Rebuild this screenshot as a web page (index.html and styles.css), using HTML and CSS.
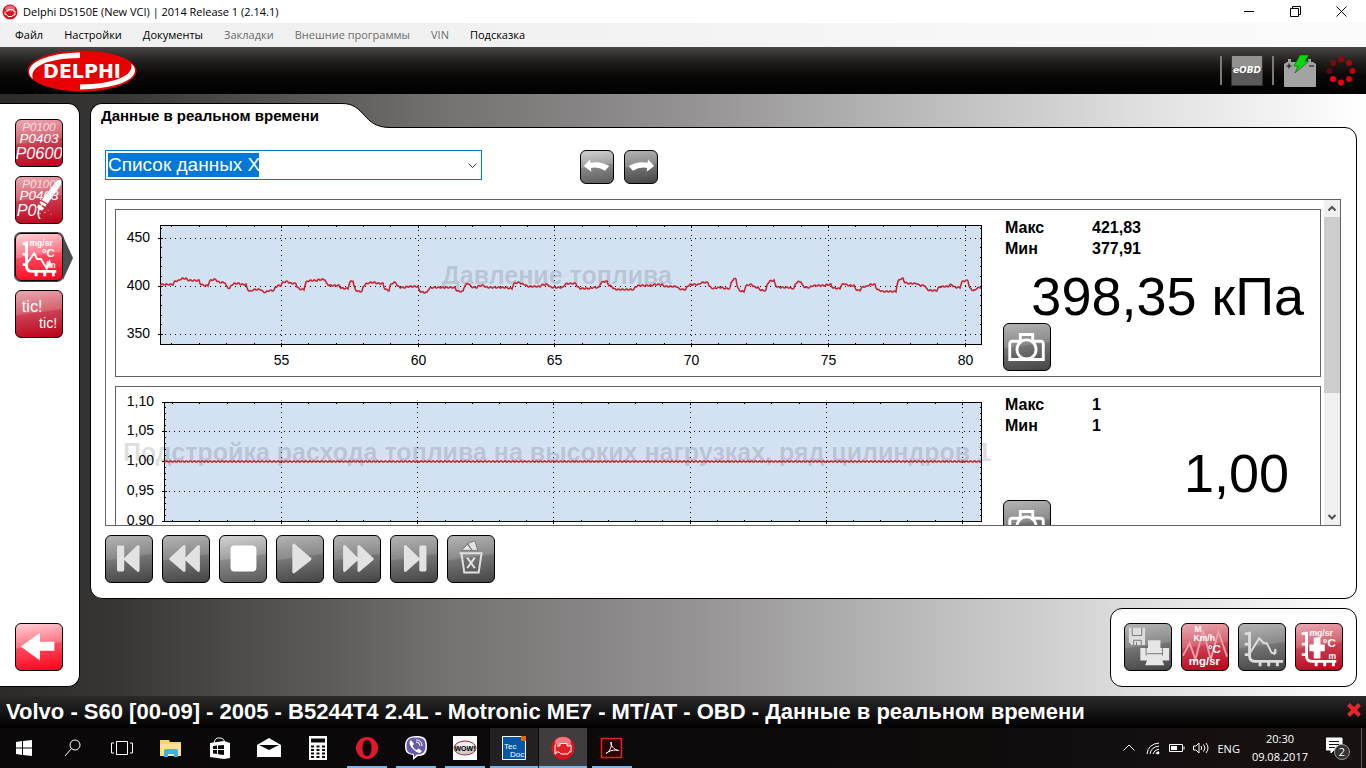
FILE: index.html
```html
<!DOCTYPE html>
<html lang="ru">
  <head>
    <meta charset="UTF-8" />
    <meta name="viewport" content="width=device-width, initial-scale=1.0" />
    <link rel="stylesheet" href="styles.css">
    <title>Delphi DS150E (New VCI)</title>
  </head>
  <body>
    <header class="titlebar">
      <svg class="app-icon" viewBox="0 0 16 16">
        <circle cx="8" cy="8" r="7.5" fill="#d8131c" />
        <ellipse cx="8" cy="4.5" rx="5" ry="3" fill="#ef6a6e" />
        <path d="M4 7h2V5.500h5V7h2v4h-2l-1 1.500H6L4.500 10.500H3V7.500" fill="none" stroke="#fff" />
      </svg>
      <span class="title">Delphi DS150E (New VCI) | 2014 Release 1 (2.14.1)</span>
      <div class="window-buttons">
        <button aria-label="Свернуть"><svg viewBox="0 0 11 11"><path d="M0 5.500h10" /></svg></button>
        <button aria-label="Свернуть в окно"><svg viewBox="0 0 11 11"><path d="M.5 2.500h8v8h-8zM2.500 2.500v-2h8v8h-2" /></svg></button>
        <button aria-label="Закрыть"><svg viewBox="0 0 11 11"><path d="M.5.500l10 10M10.500.500l-10 10" /></svg></button>
      </div>
    </header>

    <nav class="menubar">
      <button>Файл</button>
      <button>Настройки</button>
      <button>Документы</button>
      <button disabled>Закладки</button>
      <button disabled>Внешние программы</button>
      <button disabled>VIN</button>
      <button>Подсказка</button>
    </nav>

    <div class="brandbar">
      <svg class="logo" viewBox="0 0 112 42">
        <ellipse cx="56" cy="21" rx="54.500" ry="20.500" fill="#e80000" />
        <path d="M54 2.500C27 3 4 10 3 21.500c0 3 1 5 4 7.500C3 17 20 8.500 54 8z" fill="#fff" />
        <path d="M54 39.500c28-.5 54-7 55-18.500 0-3-1-5-4-7.500C109 25.500 89 34 54 34.500z" fill="#fff" />
        <text x="56" y="28" class="logo-text">DELPHI</text>
      </svg>
      <div class="indicators">
        <span class="divider"></span>
        <span class="eobd">eOBD</span>
        <span class="divider"></span>
        <svg class="battery" viewBox="0 0 34 34">
          <path d="M1 10l3-2h1V5h3v3h17V5h3v3h2l3 2v22q0 1-1 1H2q-1 0-1-1z" fill="#a3a3a3" />
          <path d="M3.500 12h5M6 9.500v5M26 12h5" stroke="#111" fill="none" />
          <path d="M17 1h9l-4 6h4L12 19l3-7h-4z" fill="#0bd80b" stroke="#0a5a0a" stroke-width=".6" />
        </svg>
        <svg class="spinner" viewBox="0 0 30 30">
          <circle cx="15" cy="3.500" r="3" fill="#8e0a0a" />
          <circle cx="23" cy="7" r="3" fill="#a30a0a" />
          <circle cx="26.500" cy="15" r="3" fill="#b80808" />
          <circle cx="23" cy="23" r="3" fill="#d40606" />
          <circle cx="15" cy="26.500" r="3" fill="#ee0202" />
          <circle cx="7" cy="23" r="3" fill="#ff0000" />
          <circle cx="3.500" cy="15" r="3" fill="#5a0c0c" />
          <circle cx="7" cy="7" r="3" fill="#780b0b" />
        </svg>
      </div>
    </div>

    <div class="workspace">
      <aside class="sidebar">
        <button class="tool red" aria-label="Коды неисправностей">
          <svg viewBox="0 0 48 48" class="codes">
            <text x="24" y="11" class="code-s">P0100</text>
            <text x="24" y="24" class="code-m">P0403</text>
            <text x="24" y="41" class="code-l">P0600</text>
          </svg>
        </button>
        <button class="tool red" aria-label="Стереть коды">
          <svg viewBox="0 0 48 48" class="codes">
            <text x="24" y="11" class="code-s">P0100</text>
            <text x="24" y="24" class="code-m">P0403</text>
            <text x="14" y="41" class="code-l">P0(</text>
            <path d="M43 3l4 0v5L33 28l-6-4z" fill="#fff" />
            <path d="M26 25l6 4-1.500 2-6-4zM23.500 28.500l6 4-2 2.500q-4 0-5.500-4z" fill="#fff" />
            <path d="M29 37h2M33 35h1M36 39h1M24 38h2" stroke="#eab" />
          </svg>
        </button>
        <button class="tool bright current" aria-label="Данные в реальном времени">
          <svg viewBox="0 0 48 48" class="graph">
            <path d="M11 8v25q0 6 6 6h25M7 10h5M7 21h5M7 32h5M21 39v5M30 39v5M39 39v5" stroke-width="3" />
            <path d="M12 30l7-10 3 6h4l6 10 3-7 2 6" stroke-width="2" />
            <text x="14" y="13" class="unit-s">mg/sr</text>
            <text x="27" y="24" class="unit-l">°C</text>
            <text x="31" y="36" class="unit-s">/m</text>
          </svg>
        </button>
        <button class="tool red" aria-label="tic tic">
          <svg viewBox="0 0 48 48">
            <text x="6" y="22" class="tic">tic!</text>
            <text x="24" y="39" class="tic tic-s">tic!</text>
          </svg>
        </button>
        <button class="tool bright back" aria-label="Назад">
          <svg viewBox="0 0 48 48"><path d="M5 23.500L25 9v9.500h15v9.500H25V38z" fill="#fff" /></svg>
        </button>
      </aside>

      <main class="content">
        <div class="tab">
          <h1>Данные в реальном времени</h1>
          <svg class="tab-end" viewBox="0 0 48 25">
            <path d="M0 .5C24 .500 20 24.500 48 24.500V25H0z" fill="#fff" />
            <path d="M0 .5C24 .500 20 24.500 48 24.500" fill="none" stroke="#000" />
          </svg>
        </div>

        <section class="panel">
          <div class="panel-top">
            <label class="combo">
              <select aria-label="Список данных">
                <option>Список данных X</option>
              </select>
              <svg viewBox="0 0 9 6"><path d="M.5.500l4 4 4-4" /></svg>
            </label>
            <div class="history">
              <button class="tool gray small light" aria-label="Предыдущий">
                <svg viewBox="0 0 34 34"><path d="M3 16L9.500 9l.5 3.500q11-2 20 3.500l-4.500 5q-7-4.500-15-3l.5 4z" fill="#fff" /></svg>
              </button>
              <button class="tool gray small" aria-label="Следующий">
                <svg viewBox="0 0 34 34"><path d="M31 16l-6.500-7-.5 3.500q-11-2-20 3.500l4.500 5q7-4.500 15-3l-.5 4z" fill="#fff" /></svg>
              </button>
            </div>
          </div>

          <div class="readings">
            <div class="cards">
              <article class="card">
                <svg class="chart" id="pressure"></svg>
                <div class="readout">
                  <dl>
                    <dt>Макс</dt><dd>421,83</dd>
                    <dt>Мин</dt><dd>377,91</dd>
                  </dl>
                  <p class="value">398,35 кПа</p>
                  <button class="tool gray" aria-label="Снимок">
                    <svg viewBox="0 0 48 48" class="camera">
                      <path d="M6 37V21q0-3 3-3h8v-7h13v7h8q3 0 3 3v16z" />
                      <circle cx="23.500" cy="26.500" r="10" />
                    </svg>
                  </button>
                </div>
              </article>
              <article class="card">
                <svg class="chart" id="trim"></svg>
                <div class="readout">
                  <dl>
                    <dt>Макс</dt><dd>1</dd>
                    <dt>Мин</dt><dd>1</dd>
                  </dl>
                  <p class="value">1,00 </p>
                  <button class="tool gray" aria-label="Снимок">
                    <svg viewBox="0 0 48 48" class="camera">
                      <path d="M6 37V21q0-3 3-3h8v-7h13v7h8q3 0 3 3v16z" />
                      <circle cx="23.500" cy="26.500" r="10" />
                    </svg>
                  </button>
                </div>
              </article>
            </div>
            <div class="scrollbar">
              <svg viewBox="0 0 16 17"><path d="M4.500 10.500L8 7l3.500 3.500" /></svg>
              <span class="thumb"></span>
              <svg viewBox="0 0 16 17"><path d="M4.500 7L8 10.500 11.500 7" /></svg>
            </div>
          </div>

          <div class="player">
            <button class="tool gray" aria-label="В начало">
              <svg viewBox="0 0 48 48" class="glyph"><path d="M13 11.500h4.500v24H13zM33.500 11v25L20 24z" /></svg>
            </button>
            <button class="tool gray" aria-label="Назад">
              <svg viewBox="0 0 48 48" class="glyph"><path d="M22 11v25L8 24zM37 11v25L24 24z" /></svg>
            </button>
            <button class="tool gray light" aria-label="Стоп">
              <svg viewBox="0 0 48 48"><rect x="11" y="10" width="27" height="27" rx="4" fill="#fff" /></svg>
            </button>
            <button class="tool gray" aria-label="Пуск">
              <svg viewBox="0 0 48 48" class="glyph"><path d="M17.500 9.500v28L34.500 24z" /></svg>
            </button>
            <button class="tool gray" aria-label="Вперёд">
              <svg viewBox="0 0 48 48" class="glyph"><path d="M11 11v25L24 24zM26 11v25L40 24z" /></svg>
            </button>
            <button class="tool gray" aria-label="В конец">
              <svg viewBox="0 0 48 48" class="glyph"><path d="M15 11v25l13.500-12zM31 11.500h4.500v24H31z" /></svg>
            </button>
            <button class="tool gray" aria-label="Удалить">
              <svg viewBox="0 0 48 48" class="bin">
                <path d="M12 18h24M14 18l3 20h15l3-20" />
                <path d="M20 22.500l8 11M28 22.500l-8 11" />
                <path d="M14 15l7-7 4 7zM20 8l8-3 3 10h-6z" class="paper" />
              </svg>
            </button>
          </div>
        </section>

        <footer class="actions">
          <button class="tool gray" aria-label="Сохранить и печать">
            <svg viewBox="0 0 48 48">
              <path d="M4 4h17v18H7l-3-3z" fill="#ddd" />
              <path d="M7.500 4v8h10V4M9 22v-5h8v5M12 22v-3" fill="none" stroke="#777" />
              <path d="M24 17h13v8h9v13h-7l2 5H21l2-5h-7V25h8z" fill="#e6e6e6" />
              <path d="M22 25v8M39 25v8M23 31h16" stroke="#777" fill="none" />
            </svg>
          </button>
          <button class="tool red" aria-label="Единицы измерения">
            <svg viewBox="0 0 48 48">
              <path d="M1 33l7-13 6 17L22 6l8 31 8-29 9 26" fill="none" stroke="#eaa0aa" stroke-width="2" />
              <text x="13" y="8" class="unit-s">M</text>
              <text x="12" y="18" class="unit-s">Km/h</text>
              <text x="27" y="30" class="unit-l">°C</text>
              <text x="7" y="43" class="unit-l">mg/sr</text>
            </svg>
          </button>
          <button class="tool gray" aria-label="График">
            <svg viewBox="0 0 48 48" class="graph dim">
              <path d="M11 8v25q0 6 6 6h29M6 10h5M6 21h5M6 32h5M22 39v5M31 39v5M40 39v5" stroke-width="3" />
              <path d="M11 31l10-16 5 5h3l5 10 3 1 1-5v5" stroke-width="2" />
            </svg>
          </button>
          <button class="tool red" aria-label="Добавить параметр">
            <svg viewBox="0 0 48 48" class="graph">
              <path d="M11 8v25q0 6 6 6h25M6 10h5M6 21h5M6 32h5M21 39v5M30 39v5M39 39v5" stroke-width="3" />
              <path d="M22 14v22M14 25h16" stroke-width="7" />
              <text x="14" y="12" class="unit-s">mg/sr</text>
              <text x="28" y="24" class="unit-l">°C</text>
              <text x="34" y="36" class="unit-s">m</text>
            </svg>
          </button>
        </footer>
      </main>
    </div>

    <div class="statusbar">
      <p>Volvo - S60 [00-09] - 2005 - B5244T4 2.4L - Motronic ME7 - MT/AT - OBD - Данные в реальном времени</p>
      <button aria-label="Отключить">
        <svg viewBox="0 0 16 16"><path d="M2.500 2.500l11 11M13.500 2.500l-11 11" /></svg>
      </button>
    </div>

    <div class="taskbar">
      <div class="apps">
        <button aria-label="Пуск"><svg viewBox="0 0 24 24"><path d="M4 6l6-1v6.500H4zM11 5l9-1v7.500h-9zM4 12.500h6V19l-6-1zM11 12.500h9V20l-9-1z" fill="#fff" /></svg></button>
        <button aria-label="Поиск"><svg viewBox="0 0 24 24" class="line"><circle cx="14" cy="9" r="5" /><path d="M10.500 12.500L4 20" /></svg></button>
        <button aria-label="Представление задач"><svg viewBox="0 0 24 24" class="line"><path d="M6.500 5.500h11v13h-11zM4 7H1.500v10H4M20 7h2.500v10H20" /></svg></button>
        <button aria-label="Проводник">
          <svg viewBox="0 0 24 24"><path d="M1 4h9l1 2h11v14H1z" fill="#f6d473" /><path d="M1 8h21v12H1z" fill="#fde391" /><path d="M5 21v-6q0-2 2-2h10q2 0 2 2v6h-4v-3H9v3z" fill="#3bb3e8" /></svg>
        </button>
        <button aria-label="Магазин">
          <svg viewBox="0 0 24 24"><path d="M6 7q1-6 6-5 4 0 5 5" fill="none" stroke="#fff" /><path d="M2 7l14-2 6 2v15l-6 1-14-2z" fill="#fff" /><path d="M5 10l4-.5V13H5zM10 9.500L16 9v4h-6zM5 14h4v4l-4-.5zM10 14h6v5l-6-.7z" fill="#0a0808" /></svg>
        </button>
        <button aria-label="Почта">
          <svg viewBox="0 0 24 24"><path d="M0 9l12-7 12 7v12H0z" fill="#fff" /><path d="M2 9h20l-10 5 7 3.500z" fill="#0a0808" /></svg>
        </button>
        <button aria-label="Калькулятор">
          <svg viewBox="0 0 24 24"><path d="M3 0h18v24H3z" fill="#fff" /><path d="M5 2.500h14v4H5z" fill="#0a0808" /><path d="M5 10.500h14M5 14h14M5 17.500h14M5 21h14" stroke="#0a0808" stroke-width="2" stroke-dasharray="3 2.500" /></svg>
        </button>
        <button class="open" aria-label="Opera">
          <svg viewBox="0 0 24 24"><path fill-rule="evenodd" d="M12 1a11 11 0 1 0 0 22 11 11 0 1 0 0-22zm0 3c3 0 4.500 3.500 4.500 8S15 20 12 20s-4.500-3.500-4.500-8S9 4 12 4z" fill="#e3192b" /></svg>
        </button>
        <button class="open" aria-label="Viber">
          <svg viewBox="0 0 24 24"><path d="M12 0c8 0 11 2 11 10s-3 10-9 10l-5 4v-5C3 18 1 16 1 10S4 0 12 0z" fill="#fff" /><path d="M12 1.500c7 0 9.500 2 9.500 8.500s-3 8.500-8.500 8.500l-3 2.500v-3c-5-.5-7.500-2-7.500-8s2-8.500 9.500-8.500z" fill="#6a5aa8" /><path d="M7 4l3 4-1.500 2q1.500 3 4 4l2-1.500 3.500 2.500-2 2q-3 0-7-4T5.500 6z" fill="#fff" /><path d="M12 6q4 0 4 4M12 4q6 0 6 6" stroke="#fff" fill="none" /></svg>
        </button>
        <button class="open" aria-label="WOW">
          <svg viewBox="0 0 24 24"><path d="M0 0h24v24H0z" fill="#fff" /><ellipse cx="12" cy="12" rx="11" ry="7" fill="#ccc" stroke="#a33" /><ellipse cx="12" cy="9" rx="8" ry="3" fill="#f2f2f2" /><text x="12" y="15" class="wow">WOW!</text></svg>
        </button>
        <button class="open active" aria-label="TecDoc">
          <svg viewBox="0 0 24 24"><path d="M.5.500h23v23H.5z" fill="#0458a6" stroke="#fff" /><path d="M19 0h5v5h-5z" fill="#ee6412" /><text x="2" y="13" class="tecdoc">Tec</text><text x="8" y="21" class="tecdoc">Doc</text></svg>
        </button>
        <button class="open active focused" aria-label="Delphi">
          <svg viewBox="0 0 24 24"><circle cx="12" cy="12" r="11.500" fill="#d8131c" /><ellipse cx="12" cy="6" rx="8" ry="5" fill="#ef7a7e" /><path d="M6 10h3V7.500h7V10h3v-1h1v7h-1v-1l-2 3h-7l-2-2H5v2H4V9h1" fill="#e02028" stroke="#fff" /></svg>
        </button>
        <button class="open" aria-label="Acrobat">
          <svg viewBox="0 0 24 24"><path d="M1.500 2.500h20v19h-20z" fill="#2b0505" stroke="#e2231a" stroke-width="1.500" /><path d="M6 17.500c4-2 6.500-8 5-11.500-1 3 3 8 7.500 8.500-4-1-9 0-12.500 3z" fill="none" stroke="#fff" /></svg>
        </button>
      </div>
      <div class="tray">
        <svg viewBox="0 0 16 16"><path d="M2.500 10.500L8 5l5.500 5.500" /></svg>
        <svg viewBox="0 0 16 16"><path d="M2 14Q3 4 14 3M5 14q1-7 9-8M8 14q1-4 6-5M11 14q0-2 3-2" /><circle cx="13" cy="13" r="1" fill="#fff" /></svg>
        <svg viewBox="0 0 16 16"><path d="M.5 4.500h13v7H.5zM15 6.500v3" /><path d="M2 6h6v4H2z" fill="#fff" stroke="none" /></svg>
        <svg viewBox="0 0 16 16"><path d="M.5 6H3l3-3v10l-3-3H.5zM8 6q1.500 2 0 4M10.500 4.500q3 3.500 0 7M13 3q4 5 0 10" /></svg>
        <span class="lang">ENG</span>
        <time class="clock">20:30<br>09.08.2017</time>
        <div class="notifications">
          <svg viewBox="0 0 24 24"><path d="M0 2h16v12H8l-3 3v-3H0z" fill="#fff" /><path d="M3 5.500h10M3 8.500h10M3 11.500h6" stroke="#111" /></svg>
          <span class="count">2</span>
        </div>
      </div>
    </div>
    <script src="script.js"></script>
  </body>
</html>
```
FILE: styles.css
```css
* {
  margin: 0;
  padding: 0;
  box-sizing: border-box;
}

body {
  display: flex;
  flex-direction: column;
  height: 100vh;
  overflow: hidden;
  font-family: "Liberation Sans", Arial, sans-serif;
  color: #000;
  background-color: #fff;
}

button {
  border: none;
  background: none;
  color: inherit;
  font-family: inherit;
}

svg {
  display: block;
}

/* WINDOW */
.titlebar {
  display: flex;
  align-items: center;
  height: 23px;
  padding: 0 2px;
  font-family: "Open Sans", "Segoe UI", sans-serif;
  font-size: 11px;
}

.app-icon {
  width: 16px;
  height: 16px;
  margin-right: 5px;
}

.window-buttons {
  display: flex;
  margin-left: auto;
}

.window-buttons button {
  display: flex;
  justify-content: center;
  width: 46px;
}

.window-buttons svg {
  width: 11px;
  height: 11px;
  fill: none;
  stroke: #000;
}

.menubar {
  display: flex;
  align-items: center;
  gap: 21px;
  height: 24px;
  padding: 0 15px 2px;
  background: linear-gradient(90deg, #f0f0f0 30%, #fbfbfb);
  font-family: "Open Sans", "Segoe UI", sans-serif;
}

.menubar button {
  font-size: 11px;
}

.menubar button:disabled {
  color: #6d6d6d;
}

.brandbar {
  display: flex;
  align-items: center;
  justify-content: space-between;
  height: 47px;
  padding: 0 10px 0 26px;
  background: linear-gradient(#484644, #1c1b1a 35%, #0a0909 60%, #000);
}

.logo {
  width: 112px;
  height: 42px;
}

.logo-text {
  font: bold 19px "DejaVu Sans", sans-serif;
  text-anchor: middle;
  fill: #fff;
}

.indicators {
  display: flex;
  align-items: center;
  gap: 9px;
}

.divider {
  width: 2px;
  height: 29px;
  background-color: #7a7a7a;
}

.eobd {
  display: flex;
  justify-content: center;
  width: 32px;
  height: 31px;
  border: 1px solid #333;
  background: linear-gradient(#929292 38%, #5a5a5a 42%);
  color: #fff;
  font: italic bold 9px/29px "DejaVu Sans", sans-serif;
}

.battery {
  width: 34px;
  height: 34px;
}

.spinner {
  width: 30px;
  height: 30px;
}

/* LAYOUT */
.workspace {
  flex: 1;
  display: flex;
  gap: 10px;
  min-height: 0;
  padding: 9px 9px 9px 0;
  background: linear-gradient(90deg, #2c2b2a, #363534 8%, #5a5957 23%, #757371 33%, #959394 51%, #c4c3c4 71%, #e2e2e2 85%, #fff);
}

.sidebar {
  display: flex;
  flex-direction: column;
  gap: 9px;
  width: 80px;
  padding: 15px;
  border: 1px solid #000;
  border-left: none;
  border-radius: 0 12px 12px 0;
  background-color: #fff;
}

.back {
  margin-top: auto;
}

.content {
  flex: 1;
  display: flex;
  flex-direction: column;
  min-width: 0;
}

.tab {
  display: flex;
  height: 25px;
  margin-bottom: -1px;
  z-index: 1;
}

.tab h1 {
  padding: 3px 23px 0 10px;
  border: 1px solid #000;
  border-width: 1px 0 0 1px;
  border-top-left-radius: 12px;
  background-color: #fff;
  font-size: 15px;
  line-height: 18px;
}

.tab-end {
  width: 48px;
  height: 25px;
}

.panel {
  flex: 1;
  display: flex;
  flex-direction: column;
  gap: 15px;
  min-height: 0;
  padding: 22px 15px 15px 14px;
  border: 1px solid #000;
  border-radius: 0 12px 12px 12px;
  background-color: #fff;
}

.panel-top {
  display: flex;
  gap: 98px;
}

.history {
  display: flex;
  gap: 10px;
}

.combo {
  position: relative;
  width: 377px;
  height: 30px;
}

.combo select {
  width: 100%;
  height: 100%;
  padding: 0 0 2px 2px;
  border: 1px solid #0078d7;
  border-radius: 0;
  outline: none;
  appearance: none;
  background: linear-gradient(#0078d7, #0078d7) 2px 2px / 151px 24px no-repeat #fff;
  color: #fff;
  font: 19px "Liberation Sans", Arial, sans-serif;
}

.combo svg {
  position: absolute;
  right: 5px;
  top: 13px;
  width: 9px;
  height: 6px;
  fill: none;
  stroke: #444;
}

/* BUTTONS */
.tool {
  flex: none;
  width: 48px;
  height: 48px;
  border: 1px solid #000;
  border-radius: 6px;
}

.tool svg {
  width: 100%;
  height: 100%;
}

.small {
  width: 34px;
  height: 34px;
}

.gray {
  background: linear-gradient(172deg, #b4b4b4, #8a8a8a 45%, #747474 48%, #444);
}

.light {
  background: linear-gradient(172deg, #d2d2d2, #a0a0a0 45%, #888 48%, #5a5a5a);
}

.red {
  background: linear-gradient(172deg, #eaa9b1, #d5616f 45%, #cc4054 48%, #bd0018);
}

.bright {
  background: linear-gradient(172deg, #ffd0d6, #ff7484 45%, #ff4a5e 48%, #ff0019);
}

.current {
  position: relative;
  box-shadow: 0 0 0 1px #444;
}

.current::after {
  content: "";
  position: absolute;
  left: 47px;
  top: 2px;
  width: 10px;
  height: 44px;
  background-color: #4c4c4c;
  clip-path: polygon(0 0, 100% 50%, 0 100%);
}

.codes text {
  fill: #fff;
  text-anchor: middle;
  font-style: italic;
}

.codes .code-s {
  font-size: 12px;
  fill: #f9dfe2;
}

.code-m {
  font-size: 14px;
}

.code-l {
  font-size: 17px;
}

.tic {
  fill: #fff;
  font-size: 17px;
}

.tic-s {
  font-size: 15px;
}

.graph {
  fill: none;
  stroke: #fff;
}

.graph.dim {
  stroke: #ddd;
}

.unit-s,
.unit-l {
  fill: #fff;
  stroke: none;
  font-weight: bold;
  font-size: 9px;
}

.unit-l {
  font-size: 12px;
}

.camera {
  fill: none;
  stroke: #fff;
  stroke-width: 3px;
}

.glyph {
  fill: #e2e2e2;
  stroke: #e2e2e2;
  stroke-width: 3px;
  stroke-linejoin: round;
}

.bin {
  fill: none;
  stroke: #e2e2e2;
  stroke-width: 2px;
}

.bin .paper {
  fill: #e2e2e2;
  stroke: #777;
  stroke-width: 1px;
}

/* READINGS */
.readings {
  flex: 1;
  display: flex;
  gap: 3px;
  min-height: 0;
  margin-bottom: -6px;
  border: 1px solid #646464;
}

.cards {
  flex: 1;
  min-width: 0;
  overflow: hidden;
  padding: 9px 0 0 9px;
}

.card {
  display: flex;
  height: 168px;
  margin-bottom: 9px;
  border: 1px solid #646464;
}

.chart {
  flex: 1;
  min-width: 0;
  height: 166px;
}

.chart text {
  font-size: 14px;
}

.chart .frame {
  fill: #d3e2f3;
  stroke: #000;
  shape-rendering: crispEdges;
}

.chart .grid {
  stroke: #000;
  stroke-dasharray: 1 4;
  shape-rendering: crispEdges;
}

.chart .tick {
  stroke: #000;
  shape-rendering: crispEdges;
}

.chart .name {
  font-size: 25px;
  font-weight: bold;
  fill: #000;
  fill-opacity: 0.15;
}

.chart .trace {
  fill: none;
  stroke: #cc1f2c;
  stroke-width: 1.5px;
}

.readout {
  width: 318px;
  padding: 7px 16px 0 1px;
}

.readout dl {
  display: grid;
  grid-template-columns: 87px 1fr;
  margin-bottom: 11px;
  padding-left: 2px;
  font-size: 16px;
  font-weight: bold;
  line-height: 21px;
}

.value {
  font-size: 54px;
  line-height: 53px;
  text-align: right;
  white-space: pre;
}

.scrollbar {
  display: flex;
  flex-direction: column;
  width: 16px;
  background-color: #f0f0f0;
}

.scrollbar svg {
  width: 16px;
  height: 17px;
  fill: none;
  stroke: #505050;
  stroke-width: 2px;
}

.thumb {
  height: 176px;
  margin-bottom: auto;
  background-color: #cdcdcd;
}

.player {
  display: flex;
  gap: 9px;
}

.actions {
  display: flex;
  gap: 9px;
  align-self: flex-end;
  margin-top: 9px;
  padding: 14px 13px 15px;
  border: 1px solid #000;
  border-radius: 12px;
  background-color: #fff;
}

/* STATUS AND TASKBAR */
.statusbar {
  display: flex;
  align-items: center;
  justify-content: space-between;
  height: 32px;
  padding-left: 6px;
  background: linear-gradient(#2a2a2b, #000);
  color: #fff;
  font-size: 22px;
  font-weight: bold;
}

.statusbar svg {
  width: 16px;
  height: 16px;
  margin: 0 4px 4px 0;
  stroke: #e8262a;
  stroke-width: 4px;
}

.taskbar {
  display: flex;
  justify-content: space-between;
  height: 40px;
  background: linear-gradient(90deg, #0a0808, #0c0a0a 60%, #191213);
  color: #fff;
}

.apps {
  display: flex;
  gap: 1px;
}

.apps button {
  display: flex;
  align-items: center;
  justify-content: center;
  width: 48px;
}

.apps svg {
  width: 24px;
  height: 24px;
}

.apps .line {
  fill: none;
  stroke: #fff;
}

.open {
  background: linear-gradient(#76b9ed, #76b9ed) bottom / 40px 2px no-repeat;
}

.active {
  background-color: #222021;
  background-size: 48px 2px;
}

.focused {
  background-color: #403d3e;
}

.wow {
  font-size: 7px;
  font-weight: bold;
  text-anchor: middle;
}

.tecdoc {
  font-size: 8px;
  fill: #fff;
}

.tray {
  display: flex;
  align-items: center;
  gap: 8px;
  margin-right: 4px;
  padding-right: 11px;
  border-right: 1px solid #5c5859;
  font-family: "Open Sans", "Segoe UI", sans-serif;
  font-size: 11px;
}

.tray svg {
  width: 16px;
  height: 16px;
  fill: none;
  stroke: #fff;
}

.clock {
  padding: 0 10px 0 4px;
  line-height: 18px;
  text-align: center;
}

.notifications {
  position: relative;
}

.notifications svg {
  width: 24px;
  height: 24px;
}

.count {
  position: absolute;
  left: 8px;
  top: 8px;
  width: 16px;
  border: 1px solid #999;
  border-radius: 50%;
  background-color: #333;
  line-height: 14px;
  text-align: center;
}
```
FILE: script.js
```js
"use strict";

// [sample, kPa] - the level holds until the next entry
const pressure = [
  [0, 401.7], [14, 405.9], [20, 408], [27, 405.9], [40, 401], [49, 407.3], [57, 404.2], [66, 397.9],
  [71, 403.1], [80, 401.7], [87, 394.1], [92, 396.9], [102, 393.8], [107, 395.8], [115, 401], [122, 404.5],
  [129, 403.1], [137, 396.9], [145, 406.3], [158, 407.3], [166, 401], [180, 397.2], [189, 405.9], [194, 394.4],
  [203, 402.8], [208, 404.2], [216, 402.4], [224, 395.8], [230, 404.2], [237, 398.3], [246, 400], [259, 393.1],
  [268, 398.6], [296, 394.4], [304, 402.4], [310, 399], [318, 401], [325, 398.6], [348, 397.2], [353, 404.2],
  [361, 402.1], [366, 399.3], [381, 401.4], [389, 398.3], [404, 402.4], [417, 397.2], [431, 399], [440, 404.9],
  [448, 399.3], [453, 396.9], [475, 401], [493, 401.7], [503, 400], [518, 396.9], [527, 401.4], [540, 404.2],
  [549, 397.6], [556, 399], [563, 397.9], [571, 407.6], [577, 394.8], [585, 401.4], [593, 399], [599, 395.8],
  [607, 405.6], [615, 398.6], [630, 397.2], [635, 404.5], [642, 398.6], [651, 401], [666, 401.7], [672, 397.9],
  [681, 402.8], [686, 400.3], [695, 395.8], [701, 399.7], [708, 401.4], [716, 395.8], [721, 394.8], [737, 408.3],
  [744, 402.4], [758, 400.3], [766, 395.8], [778, 400], [789, 401.4], [793, 398.3], [801, 405.6], [809, 395.8],
  [816, 398.6]
];

const charts = [
  {
    id: "pressure", name: "Давление топлива", left: 44, from: 50.58, to: 80.6,
    low: 340, high: 463.5, minor: 10, labels: [350, 400, 450], digits: 0,
    showTime: true, data: pressure
  },
  {
    id: "trim", name: "Подстройка расхода топлива на высоких нагрузках, ряд цилиндров 1",
    left: 48, from: 50.7, to: 80.7, low: 0.9, high: 1.1, minor: 0.01,
    labels: [0.9, 0.95, 1, 1.05, 1.1], digits: 2, showTime: false, data: [[0, 1]]
  }
];

const plotTop = 15;
const plotHeight = 119;
const samples = 821;

function line(cls, x1, y1, x2, y2) {
  return `<line class="${cls}" x1="${x1}" y1="${y1}" x2="${x2}" y2="${y2}" />`;
}

function draw(chart) {
  const svg = document.getElementById(chart.id);
  const width = svg.getBoundingClientRect().width;
  const left = chart.left;
  const right = Math.round(width) - 21;
  const bottom = plotTop + plotHeight;
  const x = t => Math.round(left + (t - chart.from) / (chart.to - chart.from) * (right - left)) + 0.5;
  const y = v => Math.floor(bottom - (v - chart.low) / (chart.high - chart.low) * plotHeight) + 0.5;
  let out = `<rect class="frame" x="${left + 0.5}" y="${plotTop + 0.5}" width="${right - left}" height="${plotHeight}" />`;

  for (let t = Math.ceil(chart.from); t < chart.to; t++) {
    const major = t % 5 === 0;
    out += line("tick", x(t), plotTop, x(t), plotTop + (major ? 3 : 2));
    out += line("tick", x(t), bottom - 1, x(t), bottom + (major ? 3 : 1));
    if (major) {
      out += line("grid", x(t), plotTop, x(t), bottom);
      if (chart.showTime) {
        out += `<text x="${x(t)}" y="155" text-anchor="middle">${t}</text>`;
      }
    }
  }

  for (let v = chart.low; v < chart.high; v += chart.minor) {
    out += line("tick", left, y(v), left + 2, y(v)) + line("tick", right - 1, y(v), right + 1, y(v));
  }
  chart.labels.forEach(v => {
    out += line("grid", left, y(v), right, y(v)) + line("tick", left - 2, y(v), left + 3, y(v));
    out += `<text x="${left - 10}" y="${y(v) + 3.5}" text-anchor="end">${v.toFixed(chart.digits).replace(".", ",")}</text>`;
  });

  out += `<text class="name" x="${Math.round(width / 2) - 2}" y="74" text-anchor="middle">${chart.name}</text>`;

  const points = [];
  const scale = (right - left) / samples;
  let i = 0;
  let level = y(chart.data[0][1]);
  for (let n = 0; n <= samples; n++) {
    if (chart.data[i + 1] && n >= chart.data[i + 1][0]) i++;
    // ease to the new level over a few samples
    level += (y(chart.data[i][1]) - level) / 2;
    points.push(`${left + n * scale},${level + (n % 4 < 2 ? 0.5 : -0.5)}`);
  }
  out += `<polyline class="trace" points="${points.join(" ")}" />`;
  svg.innerHTML = out;
}

function drawAll() {
  charts.forEach(draw);
}

window.addEventListener("resize", drawAll);
drawAll();
```
